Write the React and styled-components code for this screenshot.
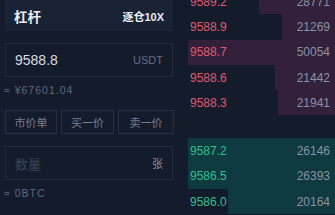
import React from 'react';
import styled, { createGlobalStyle } from 'styled-components';

const GlobalStyle = createGlobalStyle`
  html, body {
    margin: 0;
    padding: 0;
    background: #141c2c;
  }
  * { box-sizing: border-box; }
`;

const Page = styled.div`
  display: flex;
  width: 335px;
  height: 215px;
  overflow: hidden;
  background: #141c2c;
  font-family: "Liberation Sans", "Noto Sans CJK SC", sans-serif;
`;

const Form = styled.div`
  display: flex;
  flex-direction: column;
  width: 180px;
  padding: 0 7px 0 5px;
`;

const LeverBar = styled.div`
  display: flex;
  align-items: center;
  justify-content: space-between;
  height: 31px;
  padding: 0 9px;
  background: #1a2336;
  color: #e8ebf1;
  font-weight: bold;
`;

const LeverTitle = styled.span`
  font-size: 13.5px;
`;

const LeverMode = styled.span`
  font-size: 11px;
`;

const Field = styled.div`
  display: flex;
  align-items: center;
  justify-content: space-between;
  height: 34px;
  margin-top: ${p => p.$top}px;
  padding: 0 9px;
  border: 1px solid #212b3e;
`;

const FieldValue = styled.span`
  font-size: ${p => (p.$placeholder ? '13px' : '14px')};
  color: ${p => (p.$placeholder ? '#3c465a' : '#d7dbe3')};
`;

const FieldUnit = styled.span`
  font-size: ${p => p.$size}px;
  color: ${p => p.$color};
`;

const Hint = styled.div`
  margin-top: ${p => p.$top}px;
  margin-left: -1px;
  font-size: 10.5px;
  letter-spacing: 1px;
  line-height: 14px;
  color: #5f687c;
`;

const QuickRow = styled.div`
  display: grid;
  grid-template-columns: 52px 53px 56px;
  gap: 4px;
  margin-top: 13px;
`;

const QuickButton = styled.div`
  display: flex;
  align-items: center;
  justify-content: center;
  height: 24px;
  border: 1px solid #263149;
  color: #747d91;
  font-size: 11px;
`;

const Book = styled.div`
  flex: 1;
  display: flex;
  flex-direction: column;
  padding-left: 8px;
`;

const Side = styled.div`
  display: flex;
  flex-direction: column;
  margin-top: ${p => p.$top}px;
`;

const Level = styled.div`
  position: relative;
  display: flex;
  align-items: center;
  justify-content: space-between;
  height: 25.3px;
  padding: 0 5px 0 2px;
  font-size: 12px;
`;

const Depth = styled.div`
  position: absolute;
  top: 0;
  right: 0;
  bottom: 0;
  background: ${p => (p.$ask ? '#33203a' : '#0f3a3f')};
`;

const Price = styled.span`
  position: relative;
  color: ${p => (p.$ask ? '#e05a6f' : '#2ec08e')};
`;

const Amount = styled.span`
  position: relative;
  color: #8a92a4;
`;

const asks = [
  ['9589.2', '28771', 52],
  ['9588.9', '21269', 36],
  ['9588.7', '50054', 100],
  ['9588.6', '21442', 41],
  ['9588.3', '21941', 39],
];

const bids = [
  ['9587.2', '26146', 100],
  ['9586.5', '26393', 100],
  ['9586.0', '20164', 73],
];

const Levels = ({ rows, ask }) =>
  rows.map(([price, amount, depth]) => (
    <Level key={price}>
      <Depth $ask={ask} style={{ width: `${depth}%` }} />
      <Price $ask={ask}>{price}</Price>
      <Amount>{amount}</Amount>
    </Level>
  ));

const App = () => (
  <>
    <GlobalStyle />
    <Page>
      <Form>
        <LeverBar>
          <LeverTitle>杠杆</LeverTitle>
          <LeverMode>逐仓10X</LeverMode>
        </LeverBar>
        <Field $top={12}>
          <FieldValue>9588.8</FieldValue>
          <FieldUnit $size={11} $color="#636c80">USDT</FieldUnit>
        </Field>
        <Hint $top={6}>≈ ¥67601.04</Hint>
        <QuickRow>
          <QuickButton>市价单</QuickButton>
          <QuickButton>买一价</QuickButton>
          <QuickButton>卖一价</QuickButton>
        </QuickRow>
        <Field $top={12}>
          <FieldValue $placeholder>数量</FieldValue>
          <FieldUnit $size={11} $color="#8a93a6">张</FieldUnit>
        </Field>
        <Hint $top={6}>≈ 0BTC</Hint>
      </Form>
      <Book>
        <Side $top={-11}>
          <Levels rows={asks} ask />
        </Side>
        <Side $top={23}>
          <Levels rows={bids} />
        </Side>
      </Book>
    </Page>
  </>
);

export default App;
